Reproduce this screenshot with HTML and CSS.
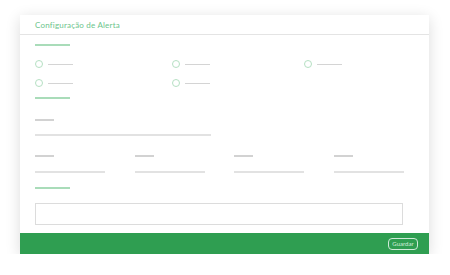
FILE: index.html
```html
<!DOCTYPE html>
<html lang="pt">
<head>
    <meta charset="UTF-8">
    <meta name="viewport" content="width=device-width, initial-scale=1.0">
    <title>Configuração de Alerta</title>
    <link rel="stylesheet" href="styles.css">
</head>
<body>
<div class="card">
    <div class="card-header">Configuração de Alerta</div>
    <div class="card-body">
        <div class="section-line"></div>
        <div class="radios">
            <div class="radio"><span class="dot"></span><span class="txt"></span></div>
            <div class="radio"><span class="dot"></span><span class="txt"></span></div>
            <div class="radio"><span class="dot"></span><span class="txt"></span></div>
            <div class="radio"><span class="dot"></span><span class="txt"></span></div>
            <div class="radio"><span class="dot"></span><span class="txt"></span></div>
        </div>
        <div class="section-line second"></div>

        <div class="label first"></div>
        <div class="input long"></div>

        <div class="fields">
            <div class="field"><div class="label"></div><div class="input"></div></div>
            <div class="field"><div class="label"></div><div class="input"></div></div>
            <div class="field"><div class="label"></div><div class="input"></div></div>
            <div class="field"><div class="label"></div><div class="input"></div></div>
        </div>

        <div class="section-line third"></div>
        <div class="textbox"></div>
    </div>
    <div class="card-footer">
        <button class="btn-save">Guardar</button>
    </div>
</div>
</body>
</html>
```

FILE: styles.css
```css
body{
    margin: 0;
    padding: 15px 21px 0 20px;
    background: #fff;
    font-family: Lato, "Noto Sans", sans-serif;
}
.card{
    width: 409px;
    background: #fff;
    box-shadow: 0 3px 14px rgba(0, 0, 0, 0.14);
}
.card-header{
    height: 20px;
    line-height: 21px;
    padding-left: 15px;
    font-size: 8px;
    letter-spacing: 0.2px;
    color: #6cc48b;
    border-bottom: 1px solid #e4e4e4;
    box-sizing: border-box;
}
.card-body{
    padding: 0 26px 8px 15px;
}
.section-line{
    width: 35px;
    height: 2px;
    margin-top: 9px;
    background: #a9dcb9;
}
.section-line.second{
    margin-top: 10px;
}
.section-line.third{
    margin-top: 14px;
}
.radios{
    display: grid;
    grid-template-columns: 137px 132px 1fr;
    row-gap: 11px;
    margin-top: 14px;
}
.radio{
    display: flex;
    align-items: center;
    gap: 5px;
    height: 8px;
}
.dot{
    width: 8px;
    height: 8px;
    border: 1px solid #b5e0c3;
    border-radius: 50%;
    box-sizing: border-box;
}
.txt{
    width: 25px;
    height: 1px;
    background: #d4d4d4;
}
.label{
    width: 19px;
    height: 2px;
    background: #d2d2d2;
}
.label.first{
    margin-top: 20px;
}
.input{
    width: 70px;
    height: 2px;
    margin-top: 14px;
    background: #e2e2e2;
}
.input.long{
    width: 176px;
    margin-top: 13px;
}
.fields{
    display: grid;
    grid-template-columns: repeat(3, 99.5px) 1fr;
    margin-top: 19px;
}
.textbox{
    height: 22px;
    margin-top: 14px;
    border: 1px solid #dcdcdc;
    box-sizing: border-box;
}
.card-footer{
    height: 21px;
    background: #2f9e51;
    display: flex;
    justify-content: flex-end;
    align-items: center;
    padding-right: 11px;
}
.btn-save{
    width: 30px;
    height: 12px;
    padding: 0;
    font-family: inherit;
    font-size: 6px;
    color: #d6eedd;
    background: transparent;
    border: 1px solid #cfead8;
    border-radius: 4px;
}
```
